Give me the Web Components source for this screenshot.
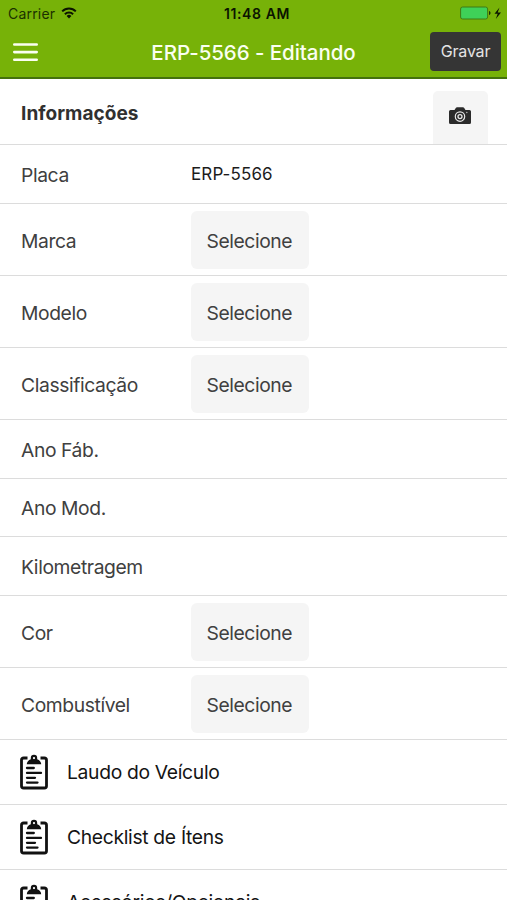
<!DOCTYPE html>
<html lang="pt-BR">
<head>
<meta charset="utf-8">
<title>ERP-5566 - Editando</title>
<style>
html,body{margin:0;height:100%;overflow:hidden;background:#fff}
body{font-family:Inter,"Liberation Sans",sans-serif;color:#3c3c3c}
</style>
</head>
<body>
<app-screen></app-screen>
<script>
const define = (name, html) => customElements.define(name, class extends HTMLElement {
  constructor() {
    super();
    this.attachShadow({ mode: 'open' }).innerHTML = html;
  }
});

define('status-bar', `
<style>
:host{display:grid;grid-template-columns:1fr auto 1fr;align-items:center;height:27px;padding:0 5px 0 8px;box-sizing:border-box;color:#0b1400;font-size:14px}
.l,.r{display:flex;align-items:center}
.l{gap:6px;letter-spacing:.2px;color:#1b3000}
.r{justify-content:flex-end}
b{font-weight:600;font-size:14px;letter-spacing:.6px;position:relative;left:2px}
svg{display:block}
.l svg{position:relative;top:-1px}
.r svg{position:relative;top:-.5px}
</style>
<span class="l"><span>Carrier</span>
<svg width="16" height="12" viewBox="0 0 16 12" fill="none" stroke="#0b1400" stroke-width="2"><path d="M1.2 4.4a9.6 9.6 0 0 1 13.6 0M3.900 7.200a5.800 5.800 0 0 1 8.200 0"/><path d="M8 11.400 5.600 9a3.400 3.400 0 0 1 4.800 0z" fill="#0b1400" stroke="none"/></svg></span>
<b>11:48 AM</b>
<span class="r"><svg width="42" height="14" viewBox="0 0 42 14"><rect x=".6" y="1" width="27" height="12" rx="2" fill="#3fd158" stroke="#3f7a14" stroke-width="1"/><path d="M29 5c2 .5 2 3.500 0 4z" fill="#17300a"/><path d="m39.500 1.500-5 6.300h3.200L35.800 13l5.200-6.600h-3.300z" fill="#0b1400"/></svg></span>`);

define('menu-icon', `
<style>:host{display:block}svg{display:block}</style>
<svg width="25" height="20" viewBox="0 0 25 20" stroke="#fafff0" stroke-width="2.600" stroke-linecap="round"><path d="M1.300 2.500h22.400M1.300 10.100h22.400M1.300 17.700h22.400"/></svg>`);

define('nav-bar', `
<style>
:host{display:grid;grid-template-columns:1fr auto 1fr;align-items:center;height:50px;padding:0 6px 0 13px;box-sizing:border-box}
h1{margin:0;font-weight:500;font-size:20.500px;color:#fafff0;letter-spacing:-.06px;line-height:24px;position:relative;left:-3.500px;top:.5px}
.save{justify-self:end;width:71px;height:39px;border-radius:4px;background:#353535;color:#e4e4e4;font:400 16px/39px Inter,sans-serif;text-align:center;padding:0;border:0;letter-spacing:-.2px;position:relative;top:-1px}
</style>
<menu-icon></menu-icon><h1><slot></slot></h1><button class="save">Gravar</button>`);

define('section-header', `
<style>
:host{display:flex;justify-content:space-between;height:66px;padding:12px 19px 0 21px;box-sizing:border-box;border-bottom:1px solid #dcdcdc}
h2{margin:0;font-size:19px;font-weight:700;line-height:44px;color:#303030;letter-spacing:.05px;position:relative;top:.5px}
.cam{width:55px;height:53px;background:#f5f5f5;border-radius:5px 5px 0 0;display:flex;align-items:center;justify-content:center}
svg{position:relative;top:-1.500px;left:-.5px}
</style>
<h2><slot></slot></h2>
<div class="cam"><svg width="24" height="20" viewBox="0 0 24 20"><path d="M2.500 4h4l1.300-2q.4-.8 1.300-.8h5.800q.9 0 1.300.8L17.500 4h4q1.500 0 1.500 1.500v11q0 1.500-1.500 1.500h-19Q1 18 1 16.500v-11Q1 4 2.500 4z" fill="#2b2b2b"/><circle cx="12" cy="10.600" r="4.700" fill="none" stroke="#e8e8e8" stroke-width="1.200"/><circle cx="12" cy="10.600" r="2" fill="#2b2b2b" stroke="#e8e8e8" stroke-width="1.300"/><circle cx="18.800" cy="6.500" r=".8" fill="#aaa"/></svg></div>`);

define('form-row', `
<style>
:host{display:grid;grid-template-columns:170px 1fr;align-items:center;height:var(--h,59px);padding:0 21px;box-sizing:border-box;border-bottom:1px solid #dcdcdc}
.label{font-size:19.300px;line-height:24px;color:#404040;letter-spacing:-.4px;padding-top:var(--drop,1px)}
</style>
<span class="label"><slot></slot></span><slot name="value"></slot>`);

define('select-button', `
<style>
:host{display:block;width:117.500px;height:58px;border-radius:6px;background:#f5f5f5;color:#404040;font-size:19.300px;line-height:60px;text-align:center;letter-spacing:-.42px;padding-right:1px;box-sizing:border-box}
</style><slot></slot>`);

define('text-value', `
<style>:host{display:block;font-size:17px;line-height:22px;color:#1c1c1c;letter-spacing:.12px}</style><slot></slot>`);

define('clipboard-icon', `
<style>:host{display:block}svg{display:block}</style>
<svg width="28" height="36" viewBox="0 0 28 36" fill="none" stroke="#111" stroke-linecap="round"><path d="M7.500 4H3.600Q1.500 4 1.500 6v26q0 2 2.100 2h20.800q2.100 0 2.100-2V6q0-2-2.100-2H20.500" stroke-width="2.800" stroke-linecap="butt"/><path fill-rule="evenodd" d="M6.800 10.200Q7 6.600 10.800 5.200V4a3.200 3.200 0 0 1 6.400 0v1.200Q21 6.600 21.200 10.200zM14 3a1.100 1.100 0 1 0 0 2.200A1.100 1.100 0 0 0 14 3z" fill="#111" stroke="none"/><path d="M7 14h6.800M7 18.900h14M7 23.800h8M7 28.600h10.500" stroke-width="2.300"/></svg>`);

define('link-row', `
<style>
:host{display:flex;align-items:center;gap:19px;height:65px;padding:0 20px;box-sizing:border-box;border-bottom:1px solid #dcdcdc;font-size:19.300px;letter-spacing:-.32px;color:#141414}
clipboard-icon{margin-top:-1px}
</style><clipboard-icon></clipboard-icon><span><slot></slot></span>`);

define('app-screen', `
<style>
:host{display:flex;flex-direction:column;height:900px;overflow:hidden;background:#fff}
header{background:#77b208;height:79px;box-sizing:border-box;border-bottom:2px solid #44720d;flex:none}
main{display:flex;flex-direction:column}
main>*{flex:none}
.tall{--h:72px;--drop:3px}
.short{--h:58px}
</style>
<header><status-bar></status-bar><nav-bar>ERP-5566 - Editando</nav-bar></header>
<main>
<section-header>Informações</section-header>
<form-row>Placa<text-value slot="value">ERP-5566</text-value></form-row>
<form-row class="tall">Marca<select-button slot="value">Selecione</select-button></form-row>
<form-row class="tall">Modelo<select-button slot="value">Selecione</select-button></form-row>
<form-row class="tall">Classificação<select-button slot="value">Selecione</select-button></form-row>
<form-row>Ano Fáb.</form-row>
<form-row class="short">Ano Mod.</form-row>
<form-row>Kilometragem</form-row>
<form-row class="tall">Cor<select-button slot="value">Selecione</select-button></form-row>
<form-row class="tall">Combustível<select-button slot="value">Selecione</select-button></form-row>
<link-row>Laudo do Veículo</link-row>
<link-row>Checklist de Ítens</link-row>
<link-row>Acessórios/Opcionais</link-row>
</main>`);
</script>
</body>
</html>
